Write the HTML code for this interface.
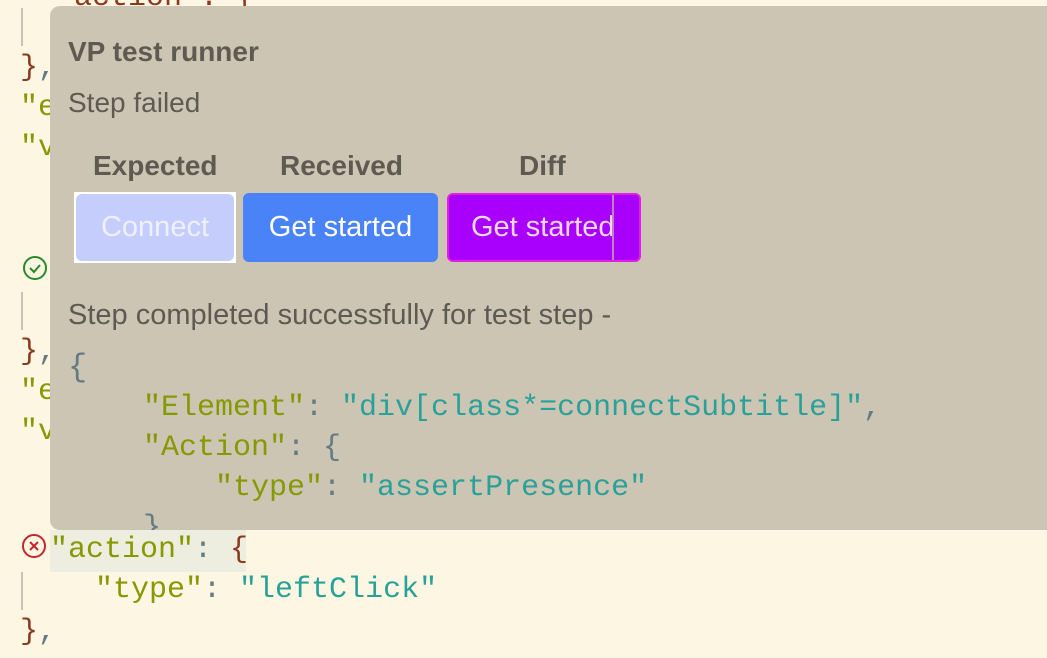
<!DOCTYPE html>
<html style="overflow:hidden;height:658px"><head><meta charset="utf-8"><style>
*{margin:0;padding:0;box-sizing:border-box}
body{width:1047px;height:658px;background:#fdf6e3;position:relative;overflow:hidden;font-family:"Liberation Sans",sans-serif}
.m{font-family:"Liberation Mono","DejaVu Sans Mono",monospace;position:absolute;white-space:pre;font-size:30px;line-height:40px}
.k{color:#859900}.s{color:#2aa198}.b{color:#8b3a1e}.p{color:#657b83}
.bar{position:absolute;left:21px;width:2px;background:#c9c2b0}
#panel{position:absolute;left:50px;top:6px;width:1010px;height:524px;background:#cdc5b4;border-radius:10px;overflow:hidden;color:#5e5a52}
.t{position:absolute;white-space:nowrap}
.btn{position:absolute;top:187px;height:69px;color:#fff;font-size:29px;display:flex;align-items:center;justify-content:center;border-radius:6px}
</style></head><body>
<div class="m" style="left:20px;top:-22px"><span class="b">  "action": {</span></div>
<div class="bar" style="top:8px;height:38px"></div>
<div class="m" style="left:20px;top:48px"><span class="b">}</span><span class="p">,</span></div>
<div class="m" style="left:20px;top:88px"><span class="k">"e</span></div>
<div class="m" style="left:20px;top:128px"><span class="k">"v</span></div>
<svg style="position:absolute;left:22px;top:255px" width="26" height="26" viewBox="0 0 26 26"><circle cx="13" cy="13" r="11" fill="none" stroke="#2a8a2a" stroke-width="2"/><path d="M8 13l4 4 6-7" fill="none" stroke="#2a8a2a" stroke-width="2"/></svg>
<div class="bar" style="top:292px;height:38px"></div>
<div class="m" style="left:20px;top:332px"><span class="b">}</span><span class="p">,</span></div>
<div class="m" style="left:20px;top:372px"><span class="k">"e</span></div>
<div class="m" style="left:20px;top:412px"><span class="k">"v</span></div>
<div style="position:absolute;left:50px;top:530px;width:196px;height:42px;background:#eeeee0"></div>
<svg style="position:absolute;left:22px;top:534px" width="26" height="26" viewBox="0 0 26 26"><circle cx="12" cy="12" r="11" fill="none" stroke="#c0282d" stroke-width="2"/><path d="M8 8l8 8M16 8l-8 8" stroke="#c0282d" stroke-width="2"/></svg>
<div class="m" style="left:50px;top:530px"><span class="k">"action"</span><span class="p">: </span><span class="b">{</span></div>
<div class="bar" style="top:572px;height:38px"></div>
<div class="m" style="left:95px;top:570px"><span class="k">"type"</span><span class="p">: </span><span class="s">"leftClick"</span></div>
<div class="m" style="left:20px;top:612px"><span class="b">}</span><span class="p">,</span></div>
<div id="panel">
<div class="t" style="left:18px;top:30px;font-size:28px;font-weight:bold">VP test runner</div>
<div class="t" style="left:18px;top:81px;font-size:28px">Step failed</div>
<div class="t" style="left:43px;top:144px;font-size:28px;font-weight:bold">Expected</div>
<div class="t" style="left:230px;top:144px;font-size:28px;font-weight:bold">Received</div>
<div class="t" style="left:469px;top:144px;font-size:28px;font-weight:bold">Diff</div>
<div style="position:absolute;left:24px;top:186px;width:162px;height:71px;background:#fff"></div>
<div class="btn" style="left:26px;width:158px;background:#c5cdfd;top:188px;height:67px;color:#eef0ff">Connect</div>
<div class="btn" style="left:193px;width:195px;background:#4a82f8">Get started</div>
<div class="btn" style="left:397px;width:194px;background:#a800fc;border:2px solid #e020e0;justify-content:flex-start;padding-left:22px;overflow:hidden;color:#f0d8f0">Get started<div style="position:absolute;left:163px;top:0;width:2px;height:100%;background:#c080c0"></div></div>
<div class="t" style="left:18px;top:293px;font-size:29px">Step completed successfully for test step -</div>
<div class="m" style="left:18px;top:342px;font-size:32px"><span class="p">{</span></div>
<div class="m" style="left:93px;top:382px"><span class="k">"Element"</span><span class="p">: </span><span class="s">"div[class*=connectSubtitle]"</span><span class="p">,</span></div>
<div class="m" style="left:93px;top:422px"><span class="k">"Action"</span><span class="p">: {</span></div>
<div class="m" style="left:165px;top:462px"><span class="k">"type"</span><span class="p">: </span><span class="s">"assertPresence"</span></div>
<div class="m" style="left:93px;top:502px"><span class="p">}</span></div>
</div>
</body></html>
